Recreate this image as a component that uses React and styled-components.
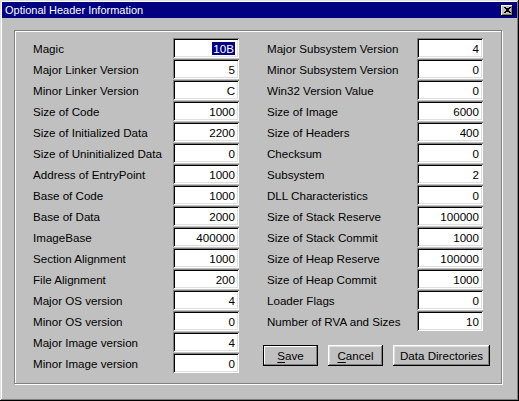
import React from 'react';
import styled, { createGlobalStyle } from 'styled-components';

const GlobalStyle = createGlobalStyle`
  body {
    margin: 0;
    background: #c0c0c0;
    font-family: 'Liberation Sans', Arial, sans-serif;
    font-size: 11.6px;
    color: #000;
  }
`;

const Window = styled.div`
  box-sizing: border-box;
  width: 519px;
  height: 401px;
  padding: 2px;
  background: #c0c0c0;
  box-shadow: inset -1px -1px #000, inset 1px 1px #dfdfdf,
    inset -2px -2px #808080, inset 2px 2px #fff;
  display: flex;
  flex-direction: column;
`;

const TitleBar = styled.div`
  height: 16px;
  background: #000080;
  color: #fff;
  display: flex;
  align-items: center;
  justify-content: space-between;
  padding: 0 4px 0 3px;
  font-size: 11px;
`;

const CloseButton = styled.div`
  box-sizing: border-box;
  width: 12px;
  height: 11px;
  background: #c0c0c0;
  box-shadow: inset -1px -1px #000, inset 1px 1px #fff, inset -2px -2px #808080;
  display: flex;
  align-items: center;
  justify-content: center;
`;

const Body = styled.div`
  padding: 12px 13px 13px 12px;
`;

const GroupBox = styled.div`
  box-sizing: border-box;
  width: 488px;
  height: 354px;
  border: 1px solid #808080;
  box-shadow: inset 1px 1px #fff, 1px 1px #fff;
  padding: 7px 0 0 18px;
  display: flex;
  gap: 28px;
`;

const Column = styled.div`
  display: flex;
  flex-direction: column;
  gap: 1px;
`;

const Row = styled.div`
  display: flex;
  align-items: center;
  height: 20px;
`;

const Label = styled.div`
  width: ${p => p.width}px;
  white-space: nowrap;
`;

const Field = styled.div`
  box-sizing: border-box;
  width: 66px;
  height: 20px;
  background: #fff;
  box-shadow: inset 1px 1px #808080, inset -1px -1px #fff,
    inset 2px 2px #000, inset -2px -2px #dfdfdf;
  display: flex;
  align-items: center;
  justify-content: flex-end;
  padding-right: 4px;
`;

const Selected = styled.span`
  background: #000080;
  color: #fff;
  padding: 0 1px;
  line-height: 13px;
`;

const ButtonRow = styled.div`
  display: flex;
  gap: 10px;
  margin: 13px 0 0 -4px;
`;

const Button = styled.div`
  box-sizing: border-box;
  width: ${p => p.width}px;
  height: 21px;
  display: flex;
  align-items: center;
  justify-content: center;
  background: #c0c0c0;
  box-shadow: ${p => p.primary
    ? 'inset 0 0 0 1px #000, inset -2px -2px #808080, inset 2px 2px #fff'
    : 'inset -1px -1px #000, inset 1px 1px #fff, inset -2px -2px #808080, inset 2px 2px #dfdfdf'};
  & u {
    text-decoration: underline;
    text-underline-offset: 2px;
  }
`;

const leftRows = [
  ['Magic', '10B'],
  ['Major Linker Version', '5'],
  ['Minor Linker Version', 'C'],
  ['Size of Code', '1000'],
  ['Size of Initialized Data', '2200'],
  ['Size of Uninitialized Data', '0'],
  ['Address of EntryPoint', '1000'],
  ['Base of Code', '1000'],
  ['Base of Data', '2000'],
  ['ImageBase', '400000'],
  ['Section Alignment', '1000'],
  ['File Alignment', '200'],
  ['Major OS version', '4'],
  ['Minor OS version', '0'],
  ['Major Image version', '4'],
  ['Minor Image version', '0'],
];

const rightRows = [
  ['Major Subsystem Version', '4'],
  ['Minor Subsystem Version', '0'],
  ['Win32 Version Value', '0'],
  ['Size of Image', '6000'],
  ['Size of Headers', '400'],
  ['Checksum', '0'],
  ['Subsystem', '2'],
  ['DLL Characteristics', '0'],
  ['Size of Stack Reserve', '100000'],
  ['Size of Stack Commit', '1000'],
  ['Size of Heap Reserve', '100000'],
  ['Size of Heap Commit', '1000'],
  ['Loader Flags', '0'],
  ['Number of RVA and Sizes', '10'],
];

const CloseIcon = () => (
  <svg width="7" height="6" viewBox="0 0 7 6" shapeRendering="crispEdges">
    <path
      d="M0 0h2v1h-2zM5 0h2v1h-2zM1 1h5v1h-5zM2 2h3v1h-3zM2 3h3v1h-3zM1 4h5v1h-5zM0 5h2v1h-2zM5 5h2v1h-2z"
      fill="#000"
    />
  </svg>
);

export default function App() {
  return (
    <>
      <GlobalStyle />
      <Window>
        <TitleBar>
          <span>Optional Header Information</span>
          <CloseButton><CloseIcon /></CloseButton>
        </TitleBar>
        <Body>
          <GroupBox>
            <Column>
              {leftRows.map(([label, value], i) => (
                <Row key={label}>
                  <Label width={140}>{label}</Label>
                  <Field>{i === 0 ? <Selected>{value}</Selected> : value}</Field>
                </Row>
              ))}
            </Column>
            <Column>
              {rightRows.map(([label, value]) => (
                <Row key={label}>
                  <Label width={150}>{label}</Label>
                  <Field>{value}</Field>
                </Row>
              ))}
              <ButtonRow>
                <Button width={55} primary><span><u>S</u>ave</span></Button>
                <Button width={55}><span><u>C</u>ancel</span></Button>
                <Button width={97}>Data Directories</Button>
              </ButtonRow>
            </Column>
          </GroupBox>
        </Body>
      </Window>
    </>
  );
}
